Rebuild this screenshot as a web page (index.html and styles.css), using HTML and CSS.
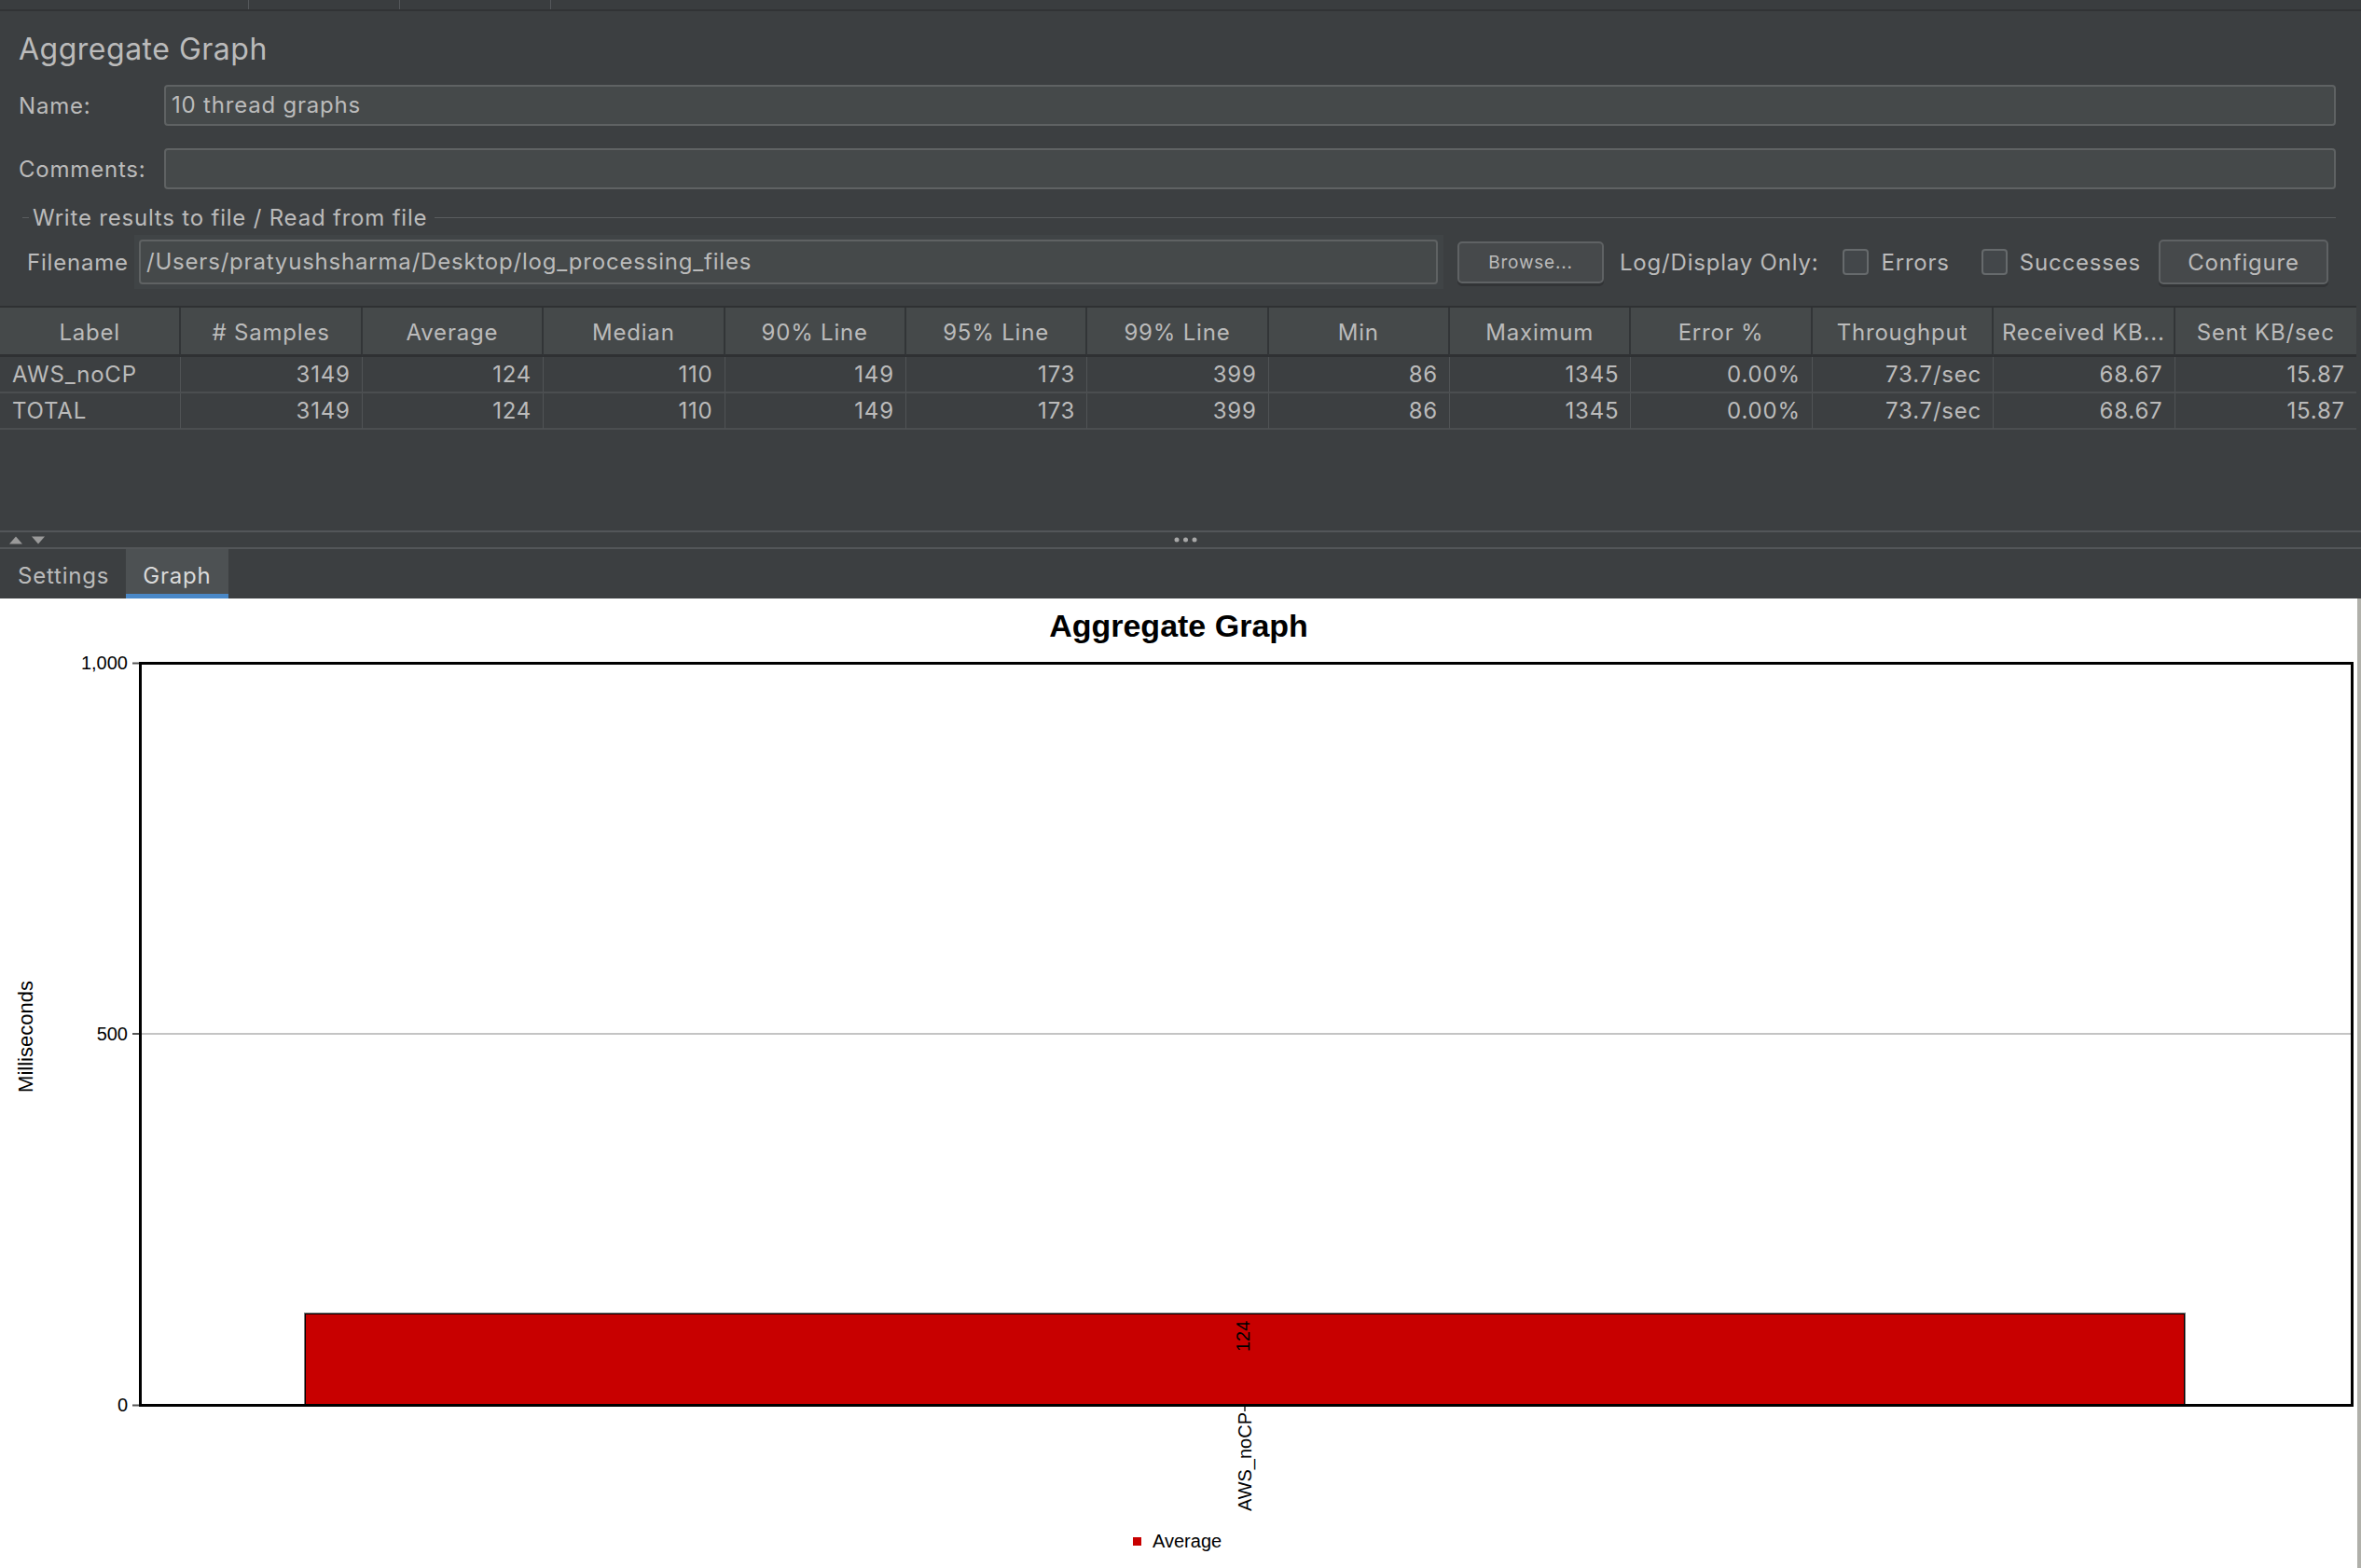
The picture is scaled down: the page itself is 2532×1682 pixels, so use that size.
FILE: index.html
```html
<!DOCTYPE html>
<html lang="en">
  <head>
    <meta charset="UTF-8" />
    <meta name="viewport" content="width=device-width, initial-scale=1.0" />
    <title>Aggregate Graph</title>
    <link rel="stylesheet" href="styles.css">
  </head>
  <body>
    <div class="top-strip">
      <span class="strip-cell first"></span>
      <span class="strip-cell"></span>
      <span class="strip-cell"></span>
    </div>

    <div class="form">
      <h1>Aggregate Graph</h1>
      <div class="row">
        <label>Name:</label>
        <div class="field">10 thread graphs</div>
      </div>
      <div class="row comments">
        <label>Comments:</label>
        <div class="field"></div>
      </div>
      <div class="group-title">Write results to file / Read from file</div>
      <div class="file-row">
        <label>Filename</label>
        <div class="file-box">
          <div class="field">/Users/pratyushsharma/Desktop/log_processing_files</div>
        </div>
        <button class="btn browse">Browse...</button>
        <span class="log-label">Log/Display Only:</span>
        <span class="opt"><span class="check"></span>Errors</span>
        <span class="opt second"><span class="check"></span>Successes</span>
        <button class="btn configure">Configure</button>
      </div>
    </div>

    <div class="results">
      <table>
        <thead>
          <tr>
            <th>Label</th>
            <th># Samples</th>
            <th>Average</th>
            <th>Median</th>
            <th>90% Line</th>
            <th>95% Line</th>
            <th>99% Line</th>
            <th>Min</th>
            <th>Maximum</th>
            <th>Error %</th>
            <th>Throughput</th>
            <th>Received KB...</th>
            <th>Sent KB/sec</th>
          </tr>
        </thead>
        <tbody>
          <tr>
            <td class="lbl">AWS_noCP</td>
            <td>3149</td>
            <td>124</td>
            <td>110</td>
            <td>149</td>
            <td>173</td>
            <td>399</td>
            <td>86</td>
            <td>1345</td>
            <td>0.00%</td>
            <td>73.7/sec</td>
            <td>68.67</td>
            <td>15.87</td>
          </tr>
          <tr>
            <td class="lbl">TOTAL</td>
            <td>3149</td>
            <td>124</td>
            <td>110</td>
            <td>149</td>
            <td>173</td>
            <td>399</td>
            <td>86</td>
            <td>1345</td>
            <td>0.00%</td>
            <td>73.7/sec</td>
            <td>68.67</td>
            <td>15.87</td>
          </tr>
        </tbody>
      </table>
    </div>

    <div class="divider">
      <svg class="arrows" width="38" height="9" viewBox="0 0 38 9">
        <polygon points="0,8.5 7,0.5 14,8.5" />
        <polygon points="24,0.5 38,0.5 31,8.5" />
      </svg>
      <svg class="dots" width="25" height="6" viewBox="0 0 25 6">
        <circle cx="3" cy="3" r="2.5" />
        <circle cx="12.5" cy="3" r="2.5" />
        <circle cx="22" cy="3" r="2.5" />
      </svg>
      <span></span>
    </div>

    <div class="tabs">
      <span class="tab">Settings</span>
      <span class="tab active">Graph</span>
    </div>

    <div class="chart">
      <svg class="graph" width="2528" height="1040" viewBox="0 0 2528 1040">
        <text class="graph-title" x="1264" y="41" text-anchor="middle">Aggregate Graph</text>

        <line class="grid" x1="152" y1="467" x2="2521" y2="467" />

        <rect x="326" y="766" width="2018" height="99" fill="#7a7a7a" />
        <rect x="327" y="767" width="2016" height="98" fill="#000" />
        <rect x="328" y="768" width="2014" height="97" fill="#c80000" />

        <rect class="frame" x="150.5" y="69.5" width="2372" height="796" />

        <line class="tick" x1="142" y1="69.5" x2="149" y2="69.5" />
        <line class="tick" x1="142" y1="467" x2="149" y2="467" />
        <line class="tick" x1="142" y1="865.5" x2="149" y2="865.5" />
        <line class="tick" x1="1335" y1="867" x2="1335" y2="872" />

        <text class="axis" x="137" y="76" text-anchor="end">1,000</text>
        <text class="axis" x="137" y="474" text-anchor="end">500</text>
        <text class="axis" x="137" y="872" text-anchor="end">0</text>

        <text class="axis label" x="35" y="470" text-anchor="middle" transform="rotate(-90 35 470)">Milliseconds</text>
        <text class="axis" x="1340" y="808" transform="rotate(-90 1340 808)">124</text>
        <text class="axis" x="1342" y="873" text-anchor="end" transform="rotate(-90 1342 873)">AWS_noCP</text>

        <rect x="1215" y="1007" width="9" height="9" fill="#c80000" />
        <text class="axis" x="1236" y="1018">Average</text>
      </svg>
    </div>
  </body>
</html>
```

FILE: styles.css
```css
body {
  margin: 0;
  width: 2532px;
  background-color: #3c3f41;
  color: #bbbbbb;
  font-family: Inter, "Liberation Sans", sans-serif;
  font-size: 24px;
  letter-spacing: 0.8px;
  overflow: hidden;
}
.top-strip {
  display: flex;
  height: 10px;
  background-color: #3a3d3f;
  border-bottom: 2px solid #313335;
}
.strip-cell {
  width: 161px;
  border-right: 1px solid #54575a;
}
.strip-cell.first {
  width: 266px;
}
.form {
  padding: 0 27px 0 20px;
}
h1 {
  margin: 0;
  padding-top: 21px;
  font-size: 32px;
  line-height: 40px;
  font-weight: 400;
  letter-spacing: 0.5px;
}
.row {
  display: flex;
  align-items: center;
  height: 44px;
  margin-top: 18px;
}
.row label {
  width: 156px;
  flex-shrink: 0;
}
.row.comments {
  margin-top: 24px;
}
.field {
  flex: 1;
  box-sizing: border-box;
  height: 44px;
  padding-left: 6px;
  line-height: 40px;
  background-color: #45494a;
  border: 2px solid #5f6263;
  border-radius: 4px;
  white-space: nowrap;
}
.group-title {
  display: flex;
  align-items: center;
  height: 30px;
  margin-top: 15px;
  padding-left: 4px;
}
.group-title::before {
  content: "";
  width: 7px;
  margin-right: 4px;
  border-top: 1px solid #5a5d5f;
}
.group-title::after {
  content: "";
  flex: 1;
  margin-left: 8px;
  border-top: 1px solid #5a5d5f;
}
.file-row {
  display: flex;
  align-items: center;
  height: 58px;
  margin-top: 4px;
}
.file-row label {
  box-sizing: border-box;
  width: 124px;
  padding-left: 9px;
  flex-shrink: 0;
}
.file-box {
  box-sizing: border-box;
  width: 1404px;
  height: 58px;
  padding: 5px 6px 5px 5px;
  background-color: #404446;
  flex-shrink: 0;
}
.file-box .field {
  height: 48px;
  line-height: 44px;
}
.btn {
  box-sizing: border-box;
  padding: 0;
  background-color: #46494b;
  color: #bbbbbb;
  font-family: Inter, "Liberation Sans", sans-serif;
  letter-spacing: 0.8px;
  border: 2px solid #5f6264;
  border-radius: 5px;
  box-shadow: 0 3px 0 #323436;
}
.btn.browse {
  width: 157px;
  height: 45px;
  margin-left: 15px;
  font-size: 19px;
}
.btn.configure {
  width: 182px;
  height: 48px;
  margin-left: auto;
  margin-right: 8px;
  font-size: 24px;
}
.log-label {
  margin-left: 17px;
}
.opt {
  display: flex;
  align-items: center;
  gap: 13px;
  margin-left: 26px;
}
.opt.second {
  margin-left: 34px;
}
.check {
  box-sizing: border-box;
  width: 28px;
  height: 28px;
  background-color: #43474a;
  border: 2px solid #666a6c;
  border-radius: 4px;
}
.results {
  height: 241px;
  margin-top: 18px;
}
table {
  width: 2527px;
  table-layout: fixed;
  border-collapse: separate;
  border-spacing: 0;
  border-top: 2px solid #2f3133;
}
th {
  padding: 3px 0 0 0;
  line-height: 47px;
  font-weight: 400;
  background-color: #45494a;
  border-right: 2px solid #323537;
  border-bottom: 3px solid #2f3133;
  white-space: nowrap;
  overflow: hidden;
}
td {
  padding: 0 12px 0 0;
  line-height: 37px;
  text-align: right;
  border-right: 1px solid #505355;
  border-bottom: 2px solid #4b4e50;
  white-space: nowrap;
}
td.lbl {
  padding-left: 13px;
  text-align: left;
}
th:last-child,
td:last-child {
  border-right: none;
}
.divider {
  display: grid;
  grid-template-columns: 1fr auto 1fr;
  align-items: center;
  height: 16px;
  padding-left: 10px;
  border-top: 2px solid #535659;
  border-bottom: 2px solid #535659;
}
.arrows {
  fill: #9a9a9a;
}
.dots {
  fill: #a8a8a8;
}
.tabs {
  display: flex;
  height: 53px;
}
.tab {
  padding: 12px 18px 2px 19px;
  line-height: 34px;
  border-bottom: 5px solid transparent;
}
.tab.active {
  padding-left: 18px;
  background-color: #4d5153;
  border-bottom-color: #4a88c7;
  color: #dadada;
}
.chart {
  width: 2528px;
  height: 1040px;
  background-color: #ffffff;
  border-right: 4px solid #b0b0aa;
}
.graph {
  display: block;
}
.graph text {
  font-family: "Liberation Sans", Arial, sans-serif;
  letter-spacing: 0;
  fill: #000000;
}
.graph-title {
  font-size: 34px;
  font-weight: 700;
}
.axis {
  font-size: 20px;
}
.axis.label {
  font-size: 22px;
}
.grid {
  stroke: #c4c4c4;
  stroke-width: 2;
}
.frame {
  fill: none;
  stroke: #000000;
  stroke-width: 3;
}
.tick {
  stroke: #555555;
  stroke-width: 2;
}
```
